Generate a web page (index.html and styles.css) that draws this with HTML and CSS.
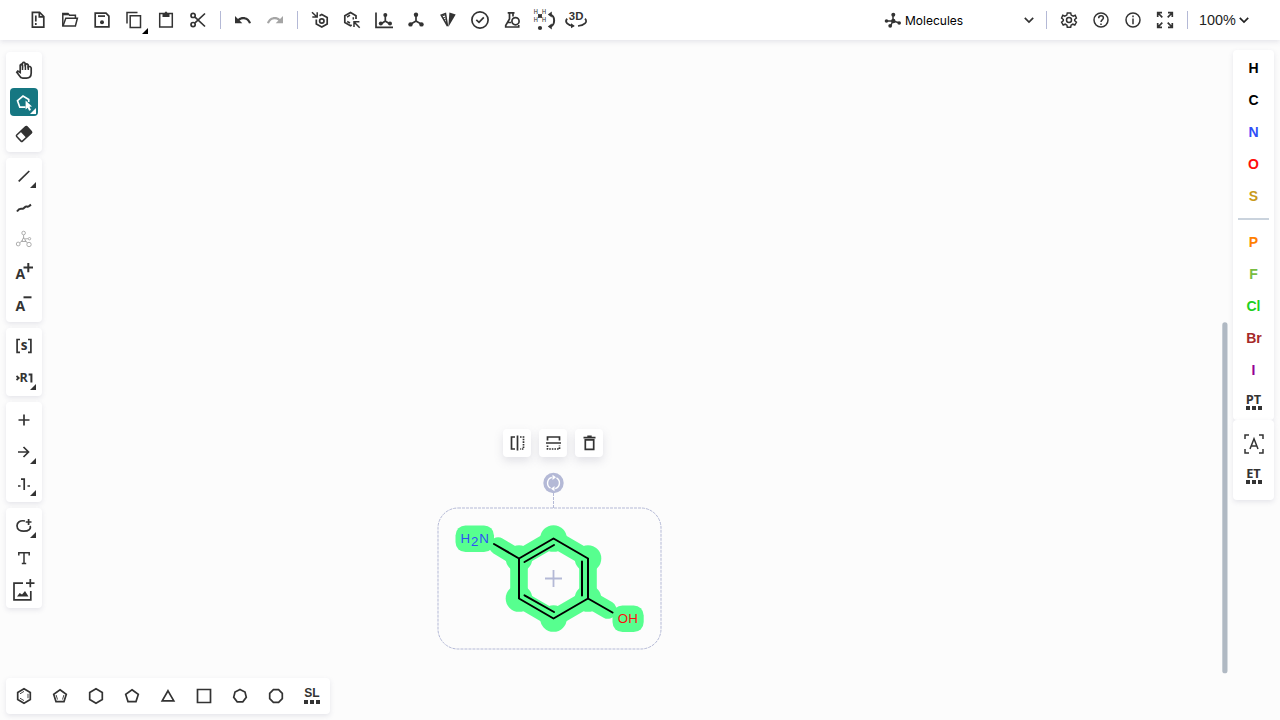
FILE: index.html
```html
<!DOCTYPE html>
<html lang="en">
<head>
<meta charset="utf-8">
<title>Molecule editor</title>
<link rel="stylesheet" href="styles.css">
</head>
<body>
<header class="topbar">
  <div class="tools files">
    <button class="tool"><svg class="icon" viewBox="-12 -12 24 24"><path d="M-5.6-7.7H1.6L5.8-3.5V7.2H-5.6Z"/><path d="M1.3-7.3V-3.2H5.8"/><path d="M-2.2-4.5V1.5M-2.2 3V5"/></svg></button>
    <button class="tool"><svg class="icon thin" viewBox="-12 -12 24 24"><path d="M-7.2 6V-6.5H-2L-.6-4.7H5.4V-2"/><path class="thick" d="M-7-5.7H-2"/><path d="M-7 6-4.2-1.8H7.4L5.4 6Z"/></svg></button>
    <button class="tool"><svg class="icon" viewBox="-12 -12 24 24"><path d="M-6.8-6.8H4L6.9-3.9V6.8H-6.8Z"/><path d="M-4-3.9H3"/><circle class="fill" cx="0" cy="2.2" r="2"/></svg></button>
    <button class="tool"><svg class="icon thin" viewBox="-12 -12 24 24"><path d="M-7 3.5V-7.5H3.5M-3.8-4.3H6.5V7.5H-3.8Z"/></svg><i class="corner black"></i></button>
    <button class="tool"><svg class="icon thin" viewBox="-12 -12 24 24"><path d="M-6.3-6.5H6.3V7H-6.3Z"/><path class="fill" d="M-3.5-7H-1.5L0-8.7 1.5-7H3.5V-3H-3.5Z"/></svg></button>
    <button class="tool"><svg class="icon" viewBox="-12 -12 24 24"><circle cx="-4.9" cy="-4.6" r="2.1"/><circle cx="-4.9" cy="4.6" r="2.1"/><path d="M-3.3-3.2 7 6.5M-3.3 3.2 7-6.5"/></svg></button>
  </div>
  <i class="rule"></i>
  <div class="tools history">
    <button class="tool"><svg class="icon" viewBox="-12 -12 24 24"><path class="fill" d="M-8-4V3.3H-.7L-3.4.6C-.2-2 4.5-1 6 3.6L8 3C6-2.8-.4-4.7-5-1Z"/></svg></button>
    <button class="tool off"><svg class="icon" viewBox="-12 -12 24 24"><path class="fill" d="M8-4V3.3H.7L3.4.6C.2-2-4.5-1-6 3.6L-8 3C-6-2.8.4-4.7 5-1Z"/></svg></button>
  </div>
  <i class="rule"></i>
  <div class="tools structure">
    <button class="tool"><svg class="icon" viewBox="-12 -12 24 24"><path d="M-3.7-.5V4L1.8 7 7.2 4V-2.5L1.8-5.5-.5-4.2"/><circle cx="1.8" cy="1" r="2.2"/><path class="thin" d="M-8-7.7-3-3M-7.7-3H-2.8V-7.8"/></svg></button>
    <button class="tool"><svg class="icon" viewBox="-12 -12 24 24"><path d="M-.3 5-1.5 5.7-7.2 2.6V-4.2L-1.5-7.5 4-4.2V-1"/><path class="thin" d="M-5-2.8-2-4.8M-4.8 1.5-2 3M1.3-2.8V-.4M7.7 7.7 2.3 2.2M2 7V1.8H7.4"/></svg></button>
    <button class="tool"><svg class="icon" viewBox="-12 -12 24 24"><path d="M-8-7.5V7.3H9"/><path d="M1.3-4V1L-3 4M1.3 1 5.8 4"/><circle class="fill" cx="1.3" cy="-5" r="2"/><circle class="fill" cx="-3.2" cy="3.4" r="2"/><circle class="fill" cx="6" cy="3.4" r="2"/></svg></button>
    <button class="tool"><svg class="icon" viewBox="-12 -12 24 24"><path d="M0-5V1L-5.5 4.2M0 1 5.5 4.2"/><circle class="fill" cx="0" cy="-5.2" r="2.2"/><circle class="fill" cx="-5.5" cy="4.4" r="2.2"/><circle class="fill" cx="5.5" cy="4.4" r="2.2"/></svg></button>
    <button class="tool"><svg class="icon thin" viewBox="-12 -12 24 24"><path d="M-.5 6-6.8-4.9-2.5-6.4Z"/><path class="fine" d="M-6-4-3-5M-5-2-2.5-3M-4 0-2-1"/><path class="fill" d="M.3 7 1.4-7.5 7.7-5.4Z"/></svg></button>
    <button class="tool"><svg class="icon" viewBox="-12 -12 24 24"><circle cx="0" cy="0" r="8.1"/><path d="M-3.7-.1-1 2.4 3.8-2.7"/></svg></button>
    <button class="tool"><svg class="icon" viewBox="-12 -12 24 24"><path d="M-4.3-7.2H2.5M-2.5-7V-1L-6.3 5.5V7H6.7V5M1-7V-3.5M-4.5 2.5H-1"/><circle cx="3.5" cy="1.2" r="3.6"/></svg></button>
    <button class="tool"><svg class="icon" viewBox="-12 -12 24 24"><g class="tiny"><text x="-10.3" y="-6">H</text><text x="-2" y="-6">H</text><text x="-10.3" y="2">H</text><text x="-2" y="2">H</text></g><path class="fine" d="M-6-6-2-2M-2-6-6-2"/><circle class="fill" cx="-4" cy="-4" r="2.1"/><circle class="fill" cx="-4" cy="8" r="2.1"/><path class="thick" d="M6-5.3C11.5-5 11.5 6 6 6.3"/><path class="fill" d="M7.8-8.5V-2.5L3.8-5.5ZM7.8 3.5V9.5L3.8 6.5Z"/></svg></button>
    <button class="tool"><svg class="icon" viewBox="-12 -12 24 24"><text class="three" x="-7.2" y="0">3D</text><path d="M-8.8-1.3C-12 2-8 5.5-2.5 6M9-1.3C12.3 2 8 5.5 2 6"/><path class="fill" d="M-5 3.2-1.2 6-5 8.3Z"/></svg></button>
  </div>
  <div class="mode"><svg class="icon" viewBox="-12 -12 24 24"><path class="thin" d="M-6 1H0L-2 5M0 1V-4M0 1 6 2.7"/><circle class="fill" cx="-6.5" cy="1" r="1.8"/><circle class="fill" cx=".3" cy="-5.2" r="2"/><circle class="fill" cx="-2.8" cy="5.8" r="1.9"/><circle class="fill" cx="6.2" cy="3" r="1.8"/><circle class="fill" cx=".3" cy="1" r="2.2"/></svg><span>Molecules</span><svg class="icon" viewBox="-12 -12 24 24"><path d="M-4.2-2.2 0 2 4.2-2.2"/></svg></div>
  <i class="rule"></i>
  <div class="tools system">
    <button class="tool"><svg class="icon thin" viewBox="-12 -12 24 24"><path d="M-1.7-7.1H1.7L2.2-4.9 4.2-3.8 6.2-4.7 7.4-2 5.7-.5V.7L7.4 2.2 5.8 5 3.8 4.2 2.1 5.2 1.7 7.2H-1.7L-2.1 5.2-3.8 4.2-5.8 5-7.4 2.2-5.7.7V-.5L-7.4-2-6.2-4.7-4.2-3.8-2.2-4.9Z"/><circle cx="0" cy="0" r="2.5"/></svg></button>
    <button class="tool"><svg class="icon thin" viewBox="-12 -12 24 24"><circle cx="0" cy="0" r="7"/><path d="M-2.3-1.8C-2.3-5 2.4-4.8 2.4-2 2.4-.5 0-.2 0 2M0 3.5V5"/></svg></button>
    <button class="tool"><svg class="icon thin" viewBox="-12 -12 24 24"><circle cx="0" cy="0" r="7"/><path d="M0-1.5V4.3M0-4.5V-2.8"/></svg></button>
    <button class="tool"><svg class="icon" viewBox="-12 -12 24 24"><path d="M-7.3-3V-7.3H-3M-7-7-2.7-2.7M3-7.3H7.3V-3M7-7 2.7-2.7M-7.3 3V7.3H-3M-7 7-2.7 2.7M3 7.3H7.3V3M7 7 2.7 2.7"/></svg></button>
  </div>
  <i class="rule"></i>
  <div class="zoom"><span>100%</span><svg class="icon" viewBox="-12 -12 24 24"><path d="M-4.2-2.2 0 2 4.2-2.2"/></svg></div>
</header>

<main class="workspace">
  <svg class="canvas" viewBox="0 40 1280 680">
    <g class="selection"><rect x="438" y="508" width="223" height="141" rx="20"/><path d="M553.5 493V508"/></g>
    <g class="glow">
      <path d="M498 546 519 558.5 553.5 538.5 588 558.5V598.5L553.5 618.5 519 598.5V558.5M588 598.5 608 610"/>
      <circle cx="553.5" cy="538.5" r="13.3"/><circle cx="588" cy="558.5" r="13.3"/><circle cx="588" cy="598.5" r="13.3"/><circle cx="553.5" cy="618.5" r="13.3"/><circle cx="519" cy="598.5" r="13.3"/><circle cx="519" cy="558.5" r="13.3"/>
      <rect x="455.5" y="525.4" width="38.5" height="26.7" rx="10"/><rect x="612.5" y="605.4" width="31.2" height="26.7" rx="10"/>
    </g>
    <g class="bonds"><path d="M519 558.5 553.5 538.5 588 558.5V598.5L553.5 618.5 519 598.5ZM494 544 519 558.5M588 598.5 612.5 612.5"/><path d="M524.5 562 554 545M582 561.5V595.5M524.5 595.3 554 612"/></g>
    <g class="atoms"><text class="nitrogen" x="460.5" y="543.2">H</text><text class="nitrogen" x="471" y="546">2</text><text class="nitrogen" x="479.3" y="543.2">N</text><text class="oxygen" x="617.8" y="623.2">OH</text></g>
    <path class="center" d="M545 578.5H562M553.5 570V587"/>
    <circle class="handle" cx="553.5" cy="483" r="10.2"/>
    <g class="spin"><path d="M551.8 477.3A6 6 0 0 0 550.5 488.2M555.2 488.7A6 6 0 0 0 556.5 477.8"/><path class="tip" d="M552.5 474.8 556 477.3 552.5 480ZM554.5 486V491.2L551 488.7Z"/></g>
    <rect class="scroll" x="1222.3" y="322.3" width="5.2" height="351" rx="2.6"/>
  </svg>

  <div class="floating">
    <button><svg class="icon" viewBox="-12 -12 24 24"><path d="M-2-6H-5.5V6H-2M.5-7.5V7.5"/><path class="dots" d="M3-6H6.5V6H3"/></svg></button>
    <button><svg class="icon" viewBox="-12 -12 24 24"><path d="M-5.5-2.5V-6H6.5V-2.5M-7 0H8"/><path class="dots" d="M-5.5 2.5V6H6.5V2.5"/></svg></button>
    <button><svg class="icon" viewBox="-12 -12 24 24"><path d="M-5.5-5.3H6.5M-1.7-6.6H2.7M-3.7-3.2V6.3H4.7V-3.2Z"/></svg></button>
  </div>

  <nav class="left">
    <div class="group">
      <button class="tool"><svg class="icon" viewBox="-12 -12 24 24"><path d="M-2.8 8-7.2 2.2-6.2 1-3.8 2.4V-4.8Q-2.8-6.5-1.7-4.8V-6.6Q-.2-8.7 1.2-6.6V-5.2Q3-7 4.2-5V-3Q6.2-4.4 7.2-2V3Q7.2 8 2.5 8.2H-1Q-2 8.2-2.8 7.4"/><path class="thin" d="M-1.5-5V0M1.4-6V0M4.3-4.5V0"/></svg></button>
      <button class="tool active"><svg class="icon" viewBox="-12 -12 24 24"><path d="M1.5 5.2H-4.2L-6.5-1.3-1-6 4.7-2.5V0"/><path class="fill" d="M1.6-1.4 8 4.6 5.5 4.8 7 8 5.1 8.8 3.7 5.7 1.6 7.5Z"/></svg><i class="corner"></i></button>
      <button class="tool"><svg class="icon thin" viewBox="-12 -12 24 24"><g class="eraser"><rect x="-7" y="-4.2" width="14" height="8.4" rx="1"/><rect class="fill" x="-1" y="-4.6" width="8.5" height="9.2" rx="1"/></g></svg></button>
    </div>
    <div class="group">
      <button class="tool"><svg class="icon" viewBox="-12 -12 24 24"><path d="M-5.3 5.3 5.3-5"/></svg><i class="corner"></i></button>
      <button class="tool"><svg class="icon" viewBox="-12 -12 24 24"><path class="thick" d="M-7 3.5C-4-1-3 1.2-1.2.7S1-2.2 3-1.5 5-2 7-3.4"/></svg></button>
      <button class="tool off"><svg class="icon fine" viewBox="-12 -12 24 24"><circle cx="-.4" cy="-7" r="1.8"/><circle cx="-5.8" cy="4" r="1.9"/><circle cx="5" cy="4.5" r="2.2"/><circle cx="5.5" cy="-1.3" r="1.2"/><path d="M-.4-5V-1M-4.3 2.8-1.2.3M3.5 3 1 .5M1-1.1 4-1.3M-2.5 1.5H2.2L-.4-2.5Z"/></svg></button>
      <button class="tool"><svg class="icon" viewBox="-12 -12 24 24"><text class="charge" x="-8.4" y="7">A</text><path class="thick" d="M-.5-4.5H9M4.3-9V.2"/></svg></button>
      <button class="tool"><svg class="icon" viewBox="-12 -12 24 24"><text class="charge" x="-8.4" y="7">A</text><path class="thick" d="M-.5-6.7H7.5"/></svg></button>
    </div>
    <div class="group">
      <button class="tool"><svg class="icon" viewBox="-12 -12 24 24"><text class="sgroup" x="-3.2" y="4">s</text><path d="M-4-6.5H-6.9V6.3H-4M4-6.5H6.9V6.3H4"/></svg></button>
      <button class="tool"><svg class="icon" viewBox="-12 -12 24 24"><path d="M-7.5-2-5.2 0-7.5 2"/><text class="rgroup" x="-4.4" y="4.4">R</text><path class="thick" d="M4.6-3.4H7.4V4.4"/></svg><i class="corner"></i></button>
    </div>
    <div class="group">
      <button class="tool"><svg class="icon" viewBox="-12 -12 24 24"><path d="M-5.5 0H5.5M0-5.5V5.5"/></svg></button>
      <button class="tool"><svg class="icon" viewBox="-12 -12 24 24"><path d="M-6 0H4M-.5-5 4.5 0-.5 5"/></svg><i class="corner"></i></button>
      <button class="tool"><svg class="icon" viewBox="-12 -12 24 24"><path d="M-6 2H-3.5M3.5 2H6M-3-4.8H.2V6"/></svg><i class="corner"></i></button>
    </div>
    <div class="group">
      <button class="tool"><svg class="icon" viewBox="-12 -12 24 24"><path d="M1-5C-4-6-7-3.5-7-.2-7 4-3.5 5.2-.3 5.2 5 5.2 7.3 2.5 6 0M1.7-4H7.5M4.6-6.9V-1"/></svg><i class="corner"></i></button>
      <button class="tool"><svg class="icon thin" viewBox="-12 -12 24 24"><path d="M-5.2-2.5V-5.2H5.2V-2.5M0-5V5.6M-2.2 5.5H2.2"/></svg></button>
      <button class="tool"><svg class="icon" viewBox="-12 -12 24 24"><path d="M-1-6.8H-10V9.8H6.8V1M2-6.8H10.5M6.3-11V-2.7"/><path class="fill" d="M-7 6.5-4.3 3-2 4.5 1 1 4.5 6.5Z"/></svg></button>
    </div>
  </nav>

  <aside class="right">
    <div class="palette">
      <button class="element">H</button><button class="element">C</button><button class="element n">N</button><button class="element o">O</button><button class="element s">S</button>
      <hr>
      <button class="element p">P</button><button class="element f">F</button><button class="element cl">Cl</button><button class="element br">Br</button><button class="element i">I</button>
      <button class="more"><span>PT</span><i></i></button>
    </div>
    <div class="palette extra">
      <button class="element"><svg class="icon thin" viewBox="-12 -12 24 24"><path d="M-9-5V-9H-5M5-9H9V-5M-9 5V9H-5M5 9H9V5M-4 5 0-5.2 4 5M-2.6 2H2.6"/></svg></button>
      <button class="more"><span>ET</span><i></i></button>
    </div>
  </aside>

  <nav class="bottom">
    <button><svg class="icon" viewBox="-12 -12 24 24"><path d="M0-7.2 6.3-3.6V3.6L0 7.2-6.3 3.6V-3.6Z"/><path class="fine" d="M-4-2.2 0-4.6M4-2.2V2.2M-4 2.2 0 4.6"/></svg></button>
    <button><svg class="icon" viewBox="-12 -12 24 24"><path d="M0-6.3 6.3-1.6 4 5.6H-4L-6.3-1.6Z"/><path class="fine" d="M-3.9-1-2.5 3.5M3.9-1 2.5 3.5"/></svg></button>
    <button><svg class="icon" viewBox="-12 -12 24 24"><path d="M0-7.2 6.3-3.6V3.6L0 7.2-6.3 3.6V-3.6Z"/></svg></button>
    <button><svg class="icon" viewBox="-12 -12 24 24"><path d="M0-6.3 6.3-1.6 4 5.6H-4L-6.3-1.6Z"/></svg></button>
    <button><svg class="icon" viewBox="-12 -12 24 24"><path d="M0-5.2 5.8 4.9H-5.8Z"/></svg></button>
    <button><svg class="icon" viewBox="-12 -12 24 24"><path d="M-6.5-6.5H6.5V6.5H-6.5Z"/></svg></button>
    <button><svg class="icon" viewBox="-12 -12 24 24"><path d="M0-6.5 5-4 6.3 1.2 2.8 5.8H-2.8L-6.3 1.2-5-4Z"/></svg></button>
    <button><svg class="icon" viewBox="-12 -12 24 24"><path d="M-2.6-6.3H2.6L6.3-2.6V2.6L2.6 6.3H-2.6L-6.3 2.6V-2.6Z"/></svg></button>
    <button class="more"><span>SL</span><i></i></button>
  </nav>
</main>
</body>
</html>
```
FILE: styles.css
```css
* { box-sizing: border-box; }
body { margin: 0; width: 1280px; height: 720px; overflow: hidden; background: #fcfcfc; color: #333; font-family: Inter, "Liberation Sans", sans-serif; }
button { display: flex; align-items: center; justify-content: center; padding: 0; border: 0; background: none; color: inherit; font: inherit; position: relative; flex: none; }

.icon { display: block; flex: none; width: 24px; height: 24px; overflow: visible; fill: none; stroke: currentColor; stroke-width: 1.7; }
.thin { stroke-width: 1.5; }
.fine { stroke-width: .9; }
.thick { stroke-width: 2; }
.icon .fill { fill: currentColor; stroke: none; }
.icon text { fill: currentColor; stroke: none; font-weight: 700; }
.icon .tiny text { font: 500 5.5px Inter, sans-serif; }
.icon .three { font: 700 11.4px "Liberation Sans", sans-serif; }
.icon .charge { font: 700 14px "Open Sans", sans-serif; }
.icon .sgroup { font: 700 13.5px "Open Sans", sans-serif; }
.icon .rgroup { font: 700 12.5px "Open Sans", sans-serif; }
.dots { stroke-dasharray: 1.6 1; }
.eraser { transform: rotate(-43deg); }

.topbar { display: flex; align-items: center; height: 40px; padding-left: 22px; background: #fff; box-shadow: 0 2px 5px rgba(103, 104, 132, .15); position: relative; z-index: 2; }
.tools { display: flex; }
.tool { width: 32px; height: 32px; }
.rule { flex: none; width: 1px; height: 18px; background: #b4b9d6; }
.files { margin-right: 6px; }
.history { margin: 0 6px; }
.structure { margin-left: 6px; }
.off { color: #a5a5a5; }
.corner { position: absolute; right: 4px; bottom: 4px; width: 6px; height: 6px; background: currentColor; clip-path: polygon(100% 0, 100% 100%, 0 100%); }
.group .corner { right: 4px; bottom: 4px; }
.corner.black { color: #000; right: 2px; bottom: 2px; }
.mode { display: flex; align-items: center; width: 160px; margin: 0 5px 0 289px; font-size: 12px; color: #000; }
.mode .icon { color: #333; }
.mode span { width: 112px; }
.system { margin: 0 6px; }
.zoom { display: flex; align-items: center; margin-left: 11px; font: 14.4px "Liberation Sans", sans-serif; color: #222; }
.zoom span { width: 37px; white-space: nowrap; }
.zoom .icon { margin-left: -4px; }

.workspace { position: relative; height: 680px; }
.canvas { position: absolute; inset: 0; width: 1280px; height: 680px; }
.selection { fill: none; stroke: #b4b9d6; stroke-width: 1; stroke-dasharray: 3 1; }
.glow { fill: #57ff8f; }
.glow path { fill: none; stroke: #57ff8f; stroke-width: 17.6; stroke-linecap: round; }
.bonds { fill: none; stroke: #000; stroke-width: 2; stroke-linecap: round; stroke-linejoin: round; }
.atoms { font-family: "Liberation Sans", sans-serif; font-size: 13.3px; }
.nitrogen { fill: #304ff7; }
.oxygen { fill: #ff0d0d; }
.center { stroke: #b4b9d6; stroke-width: 1.8; }
.handle { fill: #b4b9d6; }
.spin { fill: none; stroke: #fff; stroke-width: 1.4; }
.spin .tip { fill: #fff; stroke: none; }
.scroll { fill: #b0b9c3; }

.floating { position: absolute; left: 503.4px; top: 389px; display: flex; gap: 8px; }
.floating button { width: 28px; height: 28px; border-radius: 4px; background: #fff; box-shadow: 0 4px 10px rgba(103, 104, 132, .18); }
.left { position: absolute; left: 6px; top: 12px; display: flex; flex-direction: column; gap: 6px; }
.group { width: 36px; padding: 2px; border-radius: 4px; background: #fff; box-shadow: 0 2px 5px rgba(103, 104, 132, .15); }
.active { color: #fff; }
.active::before { content: ""; position: absolute; inset: 2px; border-radius: 4px; background: #167782; }
.active .icon { position: relative; }
.right { position: absolute; left: 1233px; top: 10px; width: 41px; }
.palette { display: flex; flex-direction: column; align-items: center; padding: 2px 0; border-radius: 4px; background: #fff; box-shadow: 0 2px 5px rgba(103, 104, 132, .15); }
.palette.extra { padding: 8px 0; }
.palette hr { width: 31px; height: 2px; margin: 6px 0; border: 0; background: #cad3dd; }
.element { width: 32px; height: 32px; font: 700 14px "Liberation Sans", sans-serif; color: #000; }
.extra .element { color: #333; }
.n { color: #304ff7; }
.o { color: #ff0d0d; }
.s { color: #c99a19; }
.p { color: #ff8000; }
.f { color: #78bc42; }
.cl { color: #1fd01f; }
.br { color: #a62929; padding-left: 1px; }
.i { color: #940094; }
.more { width: 32px; height: 32px; flex-direction: column; gap: 1px; font: 700 12.8px/11px "Open Sans", sans-serif; }
.more i { width: 16px; height: 4px; background: linear-gradient(90deg, #333 4px, transparent 4px 6px, #333 6px 10px, transparent 10px 12px, #333 12px); }
.bottom { position: absolute; left: 6px; top: 638px; display: flex; height: 36px; border-radius: 4px; background: #fff; box-shadow: 0 2px 5px rgba(103, 104, 132, .15); }
.bottom button { width: 36px; height: 36px; }
.bottom .more { font: 700 12px/11px "Liberation Sans", sans-serif; }
```
